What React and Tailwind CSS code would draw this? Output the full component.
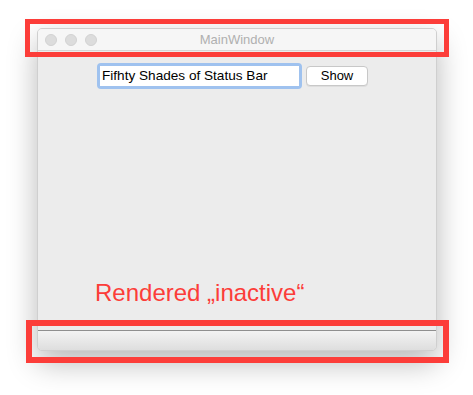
export default function App() {
  return (
    <div className="relative w-[473px] h-[395px] bg-white overflow-hidden" style={{ fontFamily: '"Liberation Sans", Arial, sans-serif' }}>
      <div className="pl-[37px] pt-[28px]">
        <div className="w-[400px] h-[323px] flex flex-col rounded-[5px] bg-[#ececec] border border-[#cfcfcf] shadow-[0_12px_30px_rgba(0,0,0,0.28)] overflow-hidden">
          <div className="h-[22px] shrink-0 relative flex items-center bg-[#f6f6f6] border-b border-[#d4d4d4]">
            <div className="flex gap-[8px] pl-[7px]">
              <span className="w-[12px] h-[12px] rounded-full bg-[#dcdcdc] border border-[#d2d2d2]" />
              <span className="w-[12px] h-[12px] rounded-full bg-[#dcdcdc] border border-[#d2d2d2]" />
              <span className="w-[12px] h-[12px] rounded-full bg-[#dcdcdc] border border-[#d2d2d2]" />
            </div>
            <div className="absolute inset-0 flex items-center justify-center text-[13px] text-[#b0b0b0]">MainWindow</div>
          </div>
          <div className="flex-1 flex flex-col">
            <div className="flex items-center pl-[59px] pt-[12px]">
              <div className="w-[205px] h-[26px] rounded-[4px] bg-[#9fc2ef] p-[3px]">
                <div className="h-[20px] bg-white flex items-center pl-[2px] text-[13.6px] text-black">Fifhty Shades of Status Bar</div>
              </div>
              <div className="ml-[4px] w-[62px] h-[20px] rounded-[4px] bg-white border border-[#c8c8c8] shadow-[0_1px_0_rgba(0,0,0,0.06)] flex items-center justify-center text-[13px] text-black">Show</div>
            </div>
            <div className="flex-1" />
            <div className="pl-[57px] pb-[23px] text-[24px] leading-[28px] text-[#fc3d39]">Rendered „inactive“</div>
          </div>
          <div className="h-[20px] shrink-0 border-t border-[#8f8f8f] bg-gradient-to-b from-[#f3f3f3] to-[#dedede]" />
        </div>
      </div>
      <div className="absolute left-[25px] top-[19px] w-[424px] h-[38px] border-[5px] border-[#fc3d39]" />
      <div className="absolute left-[26px] top-[320px] w-[423px] h-[43px] border-[6px] border-[#fc3d39]" />
    </div>
  );
}
